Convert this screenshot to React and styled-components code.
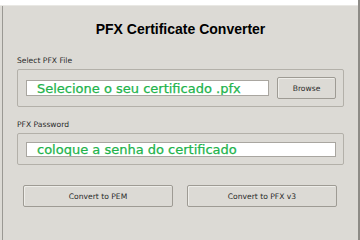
import React from "react";
import styled, { createGlobalStyle } from "styled-components";

const Global = createGlobalStyle`
  html, body { margin: 0; padding: 0; background: #dcdad5; }
  * { box-sizing: border-box; }
`;

const Window = styled.div`
  width: 360px;
  height: 240px;
  display: flex;
  background: #dcdad5;
  overflow: hidden;
`;

const Main = styled.div`
  flex: 1;
  display: flex;
  flex-direction: column;
`;

const RightEdge = styled.div`
  width: 2px;
  background: #8d8b86;
`;

const TopStrip = styled.div`
  height: 6px;
  background: #ffffff;
  border-bottom: 1px solid #e9e8e4;
`;

const Body = styled.div`
  flex: 1;
  margin-left: 2px;
  border-left: 1px solid #9a9893;
  padding: 0 14px 0 14px;
  display: flex;
  flex-direction: column;
`;

const Title = styled.h1`
  margin: 15px 0 0 0;
  text-align: center;
  font-family: "Liberation Sans", Arial, sans-serif;
  font-weight: bold;
  font-size: 14px;
  line-height: 16px;
  color: #000;
`;

const Label = styled.div`
  margin-top: ${(p) => p.$top}px;
  font-family: "DejaVu Sans", sans-serif;
  font-size: 7.6px;
  line-height: 9px;
  color: #2a2a2a;
`;

const Frame = styled.div`
  margin-top: ${(p) => p.$top}px;
  width: 327px;
  height: ${(p) => p.$h}px;
  border: 1px solid #b3b0a9;
  border-radius: 2px;
  display: flex;
  align-items: center;
  gap: 8px;
  padding: 0 7px 0 8px;
`;

const Entry = styled.div`
  flex: 1;
  height: ${(p) => p.$h}px;
  background: #ffffff;
  border: 1px solid #a9a6a0;
  display: flex;
  align-items: center;
  padding-left: 10px;
  font-family: "DejaVu Sans", sans-serif;
  font-size: 13px;
  color: #22b34b;
  -webkit-text-stroke: 0.25px #22b34b;
  white-space: nowrap;
  overflow: hidden;
`;

const Button = styled.button`
  width: ${(p) => p.$w}px;
  height: 22px;
  background: #dcdad5;
  border: 1px solid #9e9b94;
  border-radius: 2px;
  font-family: "DejaVu Sans", sans-serif;
  font-size: 7.6px;
  color: #2a2a2a;
  padding: 0;
  box-shadow: inset 1px 1px 0 #eeede9;
`;

const ButtonRow = styled.div`
  margin-top: 20px;
  padding-left: 6px;
  display: flex;
  gap: 14px;
`;

export default function App() {
  return (
    <>
      <Global />
      <Window>
        <Main>
          <TopStrip />
          <Body>
            <Title>PFX Certificate Converter</Title>
            <Label $top={19}>Select PFX File</Label>
            <Frame $top={4} $h={38}>
              <Entry $h={16}>Selecione o seu certificado .pfx</Entry>
              <Button $w={59}>Browse</Button>
            </Frame>
            <Label $top={13}>PFX Password</Label>
            <Frame $top={4} $h={32}>
              <Entry $h={15}>coloque a senha do certificado</Entry>
            </Frame>
            <ButtonRow>
              <Button $w={150}>Convert to PEM</Button>
              <Button $w={150}>Convert to PFX v3</Button>
            </ButtonRow>
          </Body>
        </Main>
        <RightEdge />
      </Window>
    </>
  );
}
